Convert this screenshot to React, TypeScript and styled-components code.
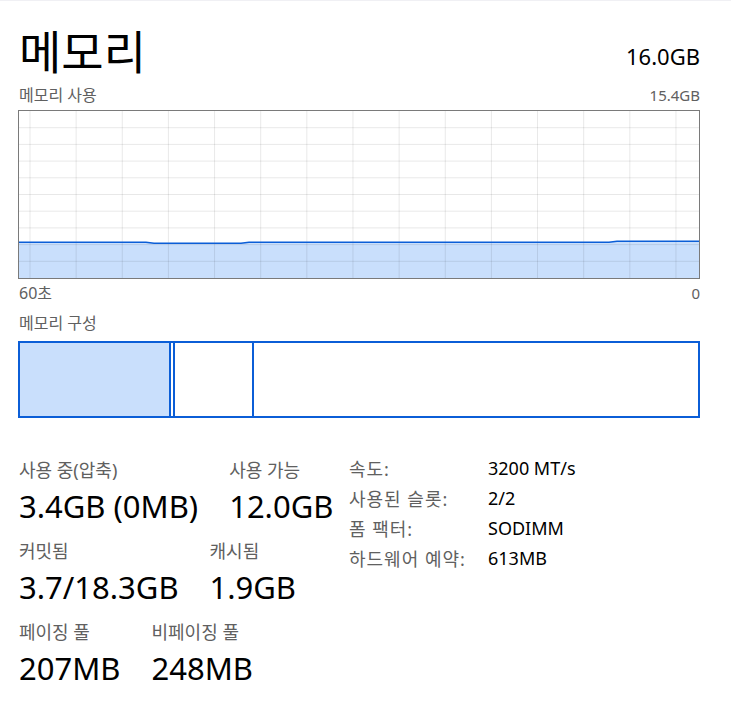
import React from "react";
import styled, {createGlobalStyle} from "styled-components";

const GlobalStyle = createGlobalStyle`
  html, body {
    margin: 0;
    padding: 0;
    background: #ffffff;
  }
  body {
    font-family: "Noto Sans", "Noto Sans CJK KR", sans-serif;
    color: #000;
  }
`

const usage = [
	[0, 131.3], [127, 131.3], [135, 132.3], [222, 132.3], [230, 131.3],
	[590, 131.3], [598, 130.3], [680, 130.3],
]

const details = [
	{name: "속도:", value: "3200 MT/s"},
	{name: "사용된 슬롯:", value: "2/2"},
	{name: "폼 팩터:", value: "SODIMM"},
	{name: "하드웨어 예약:", value: "613MB"},
]

const statRows = [
	[{label: "사용 중(압축)", value: "3.4GB (0MB)"}, {label: "사용 가능", value: "12.0GB"}],
	[{label: "커밋됨", value: "3.7/18.3GB"}, {label: "캐시됨", value: "1.9GB"}],
	[{label: "페이징 풀", value: "207MB"}, {label: "비페이징 풀", value: "248MB"}],
]

const UsageChart = () => {
	const w = 680
	const h = 167
	const cols = Array.from({length: 15}, (_, i) => 11 + i * 46.14)
	const rows = Array.from({length: 9}, (_, i) => (i + 1) * 16.7)
	const line = usage.map(p => p.join(",")).join(" ")
	return (
		<svg width={w} height={h} viewBox={`0 0 ${w} ${h}`} style={{display: "block"}}>
			<polygon points={`0,${h} ${line} ${w},${h}`} fill="#c9dffc"/>
			{cols.map((x, i) => (
				<line key={"c" + i} x1={x} y1={0} x2={x} y2={h} stroke="rgba(0,0,0,0.09)" strokeWidth={1}/>
			))}
			{rows.map((y, i) => (
				<line key={"r" + i} x1={0} y1={y} x2={w} y2={y} stroke="rgba(0,0,0,0.09)" strokeWidth={1}/>
			))}
			<polyline points={line} fill="none" stroke="#0b5ed7" strokeWidth={1.6}/>
		</svg>
	)
}

export default function App() {
	return (
		<>
			<GlobalStyle/>
			<TopEdge/>
			<Page>
				<Header>
					<Title>메모리</Title>
					<Total>16.0GB</Total>
				</Header>
				<CaptionRow>
					<Caption $korean>메모리 사용</Caption>
					<Caption>15.4GB</Caption>
				</CaptionRow>
				<Graph>
					<UsageChart/>
				</Graph>
				<AxisRow>
					<Caption $korean>60초</Caption>
					<Caption>0</Caption>
				</AxisRow>
				<SectionCaption $korean>메모리 구성</SectionCaption>
				<Composition>
					<Segment $width={149} $filled/>
					<Segment $width={2}/>
					<Segment $width={77}/>
					<Segment $grow/>
				</Composition>
				<Bottom>
					<Stats>
						{statRows.map((row, i) => (
							<StatRow key={i}>
								{row.map(s => (
									<Stat key={s.label}>
										<StatLabel>{s.label}</StatLabel>
										<StatValue>{s.value}</StatValue>
									</Stat>
								))}
							</StatRow>
						))}
					</Stats>
					<Details>
						{details.map(d => (
							<DetailRow key={d.name}>
								<DetailName>{d.name}</DetailName>
								<DetailValue>{d.value}</DetailValue>
							</DetailRow>
						))}
					</Details>
				</Bottom>
			</Page>
		</>
	)
}

const TopEdge = styled.div`
  height: 1px;
  background: #f0f0f4;
`
const Page = styled.div`
  width: 682px;
  padding: 18px 0 30px 18px;
`
const Header = styled.div`
  display: flex;
  justify-content: space-between;
  align-items: flex-end;
  padding-left: 1px;
`
const Title = styled.h1`
  margin: 0;
  font-family: "Noto Sans CJK KR", sans-serif;
  font-weight: 400;
  font-size: 46px;
  line-height: 60px;
`
const Total = styled.div`
  font-size: 22px;
  line-height: 30px;
  margin-bottom: 8px;
`
const CaptionRow = styled.div`
  display: flex;
  justify-content: space-between;
  align-items: center;
  height: 20px;
  padding-left: 1px;
  margin: 6px 0 5px;
`
const AxisRow = styled(CaptionRow)`
  margin: 4px 0 0;
`
const Caption = styled.span<{ $korean?: boolean }>`
  font-size: ${p => (p.$korean ? "16px" : "15px")};
  line-height: 20px;
  color: #606060;
`
const SectionCaption = styled(Caption)`
  display: block;
  margin: 10px 0 8px 1px;
`
const Graph = styled.div`
  border: 1px solid #7a7a7a;
  height: 167px;
  overflow: hidden;
`
const Composition = styled.div`
  display: flex;
  height: 73px;
  border: 2px solid #0b5ed7;
`
const Segment = styled.div<{ $width?: number; $filled?: boolean; $grow?: boolean }>`
  flex: ${p => (p.$grow ? "1 1 auto" : `0 0 ${p.$width}px`)};
  background: ${p => (p.$filled ? "#c9dffc" : "#ffffff")};
  border-right: ${p => (p.$grow ? "none" : "2px solid #0b5ed7")};
`
const Bottom = styled.div`
  display: flex;
  margin-top: 40px;
`
const Stats = styled.div`
  width: 330px;
  display: flex;
  flex-direction: column;
  gap: 9px;
`
const StatRow = styled.div`
  display: flex;
  gap: 30px;
`
const Stat = styled.div`
  display: flex;
  flex-direction: column;
  padding-left: 1px;
`
const StatLabel = styled.span`
  font-size: 18px;
  line-height: 24px;
  color: #606060;
`
const StatValue = styled.span`
  font-size: 31px;
  line-height: 48px;
`
const Details = styled.div`
  display: flex;
  flex-direction: column;
  margin-top: -5px;
  padding-left: 1px;
`
const DetailRow = styled.div`
  display: flex;
  height: 30px;
  align-items: center;
`
const DetailName = styled.span`
  width: 139px;
  font-size: 18px;
  letter-spacing: 1px;
  color: #606060;
`
const DetailValue = styled.span`
  font-size: 18px;
`
